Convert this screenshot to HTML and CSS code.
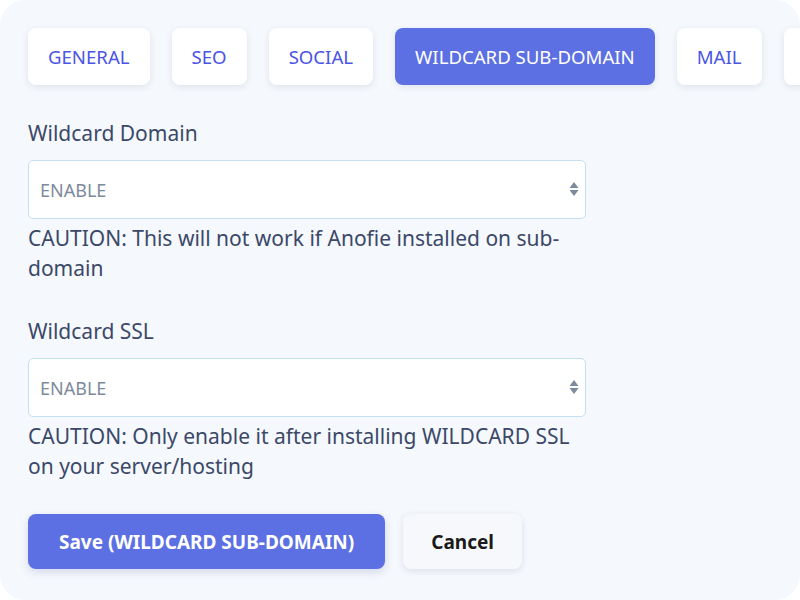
FILE: index.html
```html
<!DOCTYPE html>
<html lang="en">
<head>
<meta charset="utf-8">
<title>Settings - Wildcard Sub-Domain</title>
<link rel="stylesheet" href="styles.css">
</head>
<body>
<div class="panel">
  <nav class="tabs">
    <button class="tab">GENERAL</button>
    <button class="tab">SEO</button>
    <button class="tab">SOCIAL</button>
    <button class="tab active">WILDCARD SUB-DOMAIN</button>
    <button class="tab">MAIL</button>
    <button class="tab tab-more" aria-label="More"></button>
  </nav>
  <form class="form">
    <div class="group">
      <label class="label">Wildcard Domain</label>
      <div class="select-wrap">
        <select class="select"><option>ENABLE</option><option>DISABLE</option></select>
        <svg class="arrows" width="10" height="16" viewBox="0 0 10 16"><path d="M5 1 L9.5 7 H0.5 Z M5 15 L9.5 9 H0.5 Z" fill="#7d8a9b"/></svg>
      </div>
      <p class="help">CAUTION: This will not work if Anofie installed on sub-domain</p>
    </div>
    <div class="group">
      <label class="label">Wildcard SSL</label>
      <div class="select-wrap">
        <select class="select"><option>ENABLE</option><option>DISABLE</option></select>
        <svg class="arrows" width="10" height="16" viewBox="0 0 10 16"><path d="M5 1 L9.5 7 H0.5 Z M5 15 L9.5 9 H0.5 Z" fill="#7d8a9b"/></svg>
      </div>
      <p class="help">CAUTION: Only enable it after installing WILDCARD SSL on your server/hosting</p>
    </div>
    <div class="actions">
      <button type="button" class="btn primary">Save (WILDCARD SUB-DOMAIN)</button>
      <button type="button" class="btn secondary">Cancel</button>
    </div>
  </form>
</div>
</body>
</html>
```
FILE: styles.css
```css
* { box-sizing: border-box; }
html, body { margin: 0; padding: 0; background: #ffffff; }
body { font-family: "Noto Sans", "Open Sans", sans-serif; }

.panel {
  width: 800px;
  height: 600px;
  background: #f5f8fc;
  border-radius: 26px;
  padding: 28px 28px;
  overflow: hidden;
}

.tabs {
  display: flex;
  gap: 22px;
  width: 800px;
}
.tab {
  flex: none;
  height: 57px;
  padding: 0 20px;
  border: none;
  border-radius: 8px;
  background: #ffffff;
  color: #4a54e6;
  font-family: inherit;
  font-size: 18.6px;
  box-shadow: 0 2px 7px rgba(40, 50, 90, 0.10);
}
.tab.active {
  background: #5c6fe3;
  color: #ffffff;
}
.tab-more { width: 80px; }

.form {
  width: 558px;
  margin-top: 33px;
}
.group { margin-bottom: 33px; }
.label {
  display: block;
  font-size: 21px;
  line-height: 30px;
  color: #3b4868;
  margin-bottom: 12px;
}
.select-wrap { position: relative; }
.select {
  display: block;
  width: 100%;
  height: 59px;
  appearance: none;
  -webkit-appearance: none;
  background: #ffffff;
  border: 1px solid #c3e0f4;
  border-radius: 5px;
  padding: 0 11px;
  font-family: inherit;
  font-size: 18px;
  color: #7d8a9b;
}
.arrows {
  position: absolute;
  right: 7px;
  top: 21px;
}
.help {
  margin: 4px 0 0;
  font-size: 21px;
  line-height: 30px;
  color: #3b4868;
}

.actions {
  display: flex;
  gap: 18px;
}
.btn {
  height: 55px;
  border: none;
  border-radius: 8px;
  font-family: inherit;
  font-size: 19px;
  font-weight: 700;
}
.btn.primary {
  padding: 0 31px;
  background: #5c6fe3;
  color: #ffffff;
  box-shadow: 0 3px 8px rgba(60, 70, 150, 0.18);
}
.btn.secondary {
  padding: 0 28px;
  background: #f7f8fb;
  color: #1a1a1a;
  box-shadow: 0 2px 7px rgba(40, 50, 90, 0.12);
}
```
